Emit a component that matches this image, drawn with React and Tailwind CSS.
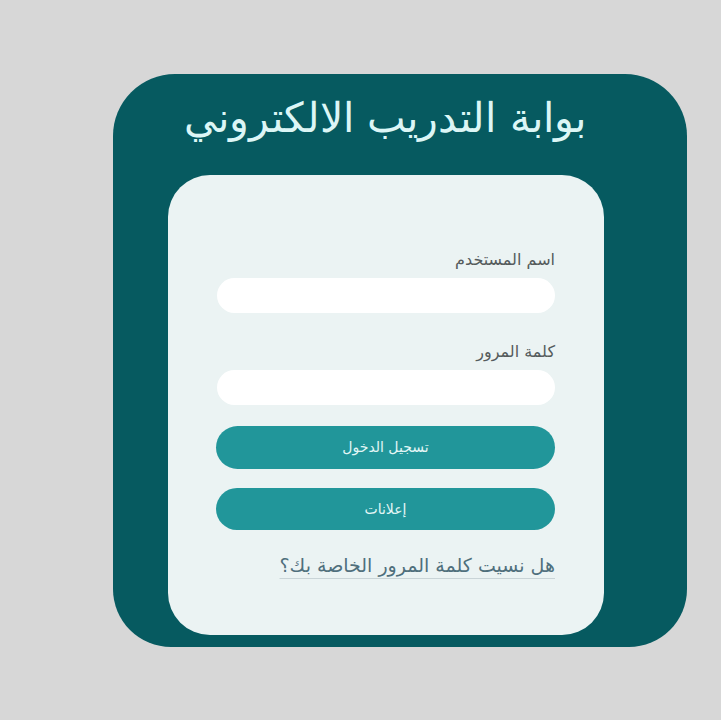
import React from 'react';

export default function App() {
  return (
    <div
      dir="rtl"
      className="w-[721px] h-[720px] bg-[#d7d7d7] overflow-hidden"
      style={{ fontFamily: '"DejaVu Sans", "Noto Sans", sans-serif' }}
    >
      <div dir="ltr" className="pt-[74px] pl-[113px]">
        <div className="w-[574px] h-[573px] bg-[#065a60] rounded-t-[62px] rounded-b-[58px] flex flex-col">
          <h1
            dir="rtl"
            className="mt-[14px] mr-[30px] text-center text-[41px] leading-[60px] font-light text-[#dcf6f6]"
          >
            بوابة التدريب الالكتروني
          </h1>

          <div
            dir="rtl"
            className="mt-[27px] ml-[55px] w-[436px] h-[460px] bg-[#ebf3f3] rounded-[42px] pt-[74px] px-[49px]"
          >
            <label className="block text-[16px] leading-[22px] text-[#555b5c]">اسم المستخدم</label>
            <input
              type="text"
              className="block mt-[7px] w-full h-[35px] rounded-full bg-white outline-none"
            />

            <label className="block mt-[28px] text-[16px] leading-[22px] text-[#555b5c]">كلمة المرور</label>
            <input
              type="password"
              className="block mt-[7px] w-full h-[35px] rounded-full bg-white outline-none"
            />

            <button className="block mt-[21px] w-[339px] h-[43px] rounded-full bg-[#21969a] text-[14px] text-[#e3f6f6]">
              تسجيل الدخول
            </button>

            <button className="block mt-[19px] w-[339px] h-[42px] rounded-full bg-[#21969a] text-[14px] text-[#e3f6f6]">
              إعلانات
            </button>

            <div className="mt-[21px]">
              <a
                href="#"
                className="text-[19px] leading-[28px] text-[#4f6f7c] underline decoration-[#c9d4d7] underline-offset-[6px]"
              >
                هل نسيت كلمة المرور الخاصة بك؟
              </a>
            </div>
          </div>
        </div>
      </div>
    </div>
  );
}
